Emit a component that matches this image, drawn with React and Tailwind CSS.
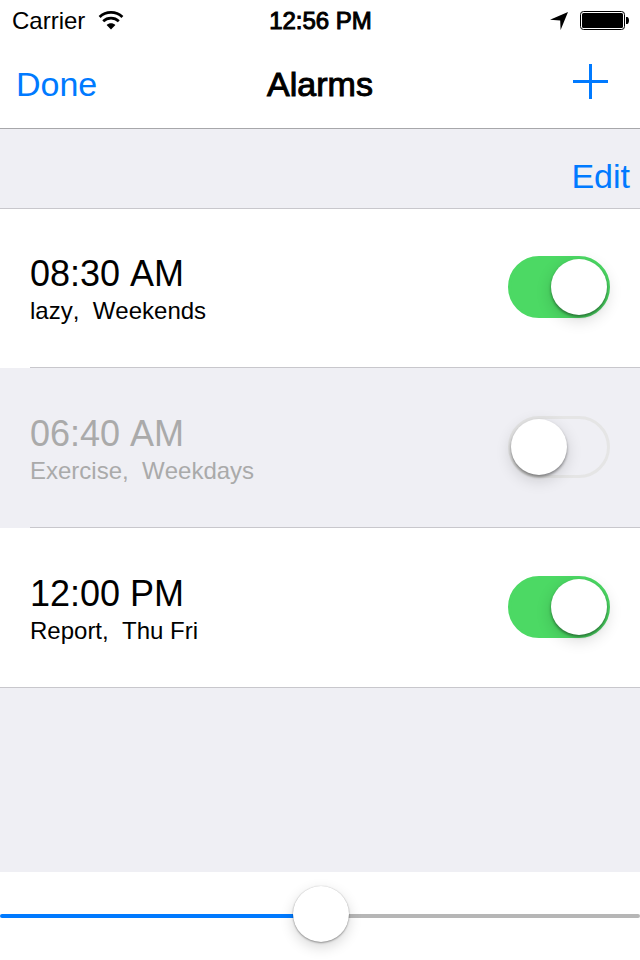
import { useState } from "react";

const INITIAL_ALARMS = [
  { id: 1, time: "08:30 AM", detail: "lazy,  Weekends", on: true },
  { id: 2, time: "06:40 AM", detail: "Exercise,  Weekdays", on: false },
  { id: 3, time: "12:00 PM", detail: "Report,  Thu Fri", on: true },
];

function WifiIcon() {
  return (
    <svg width="26" height="20" viewBox="0 0 26 20" fill="none" aria-hidden="true">
      <path d="M1.6 6C8 -0.1 18 -0.1 24.4 6" stroke="#000" strokeWidth="2.8" />
      <path d="M5.2 10.2C9.6 6.2 16.4 6.2 20.8 10.2" stroke="#000" strokeWidth="2.7" />
      <path d="M8.6 14C11 11.5 15 11.5 17.4 14L13 18.4Z" fill="#000" />
    </svg>
  );
}

function LocationIcon() {
  return (
    <svg width="18" height="18" viewBox="0 0 18 18" aria-hidden="true">
      <path d="M18 0L10.6 18L10.2 8.4L0 7.8Z" fill="#000" />
    </svg>
  );
}

function BatteryIcon() {
  return (
    <svg width="49" height="20" viewBox="0 0 49 20" aria-hidden="true">
      <rect x="0.5" y="0.5" width="44" height="18" rx="3" fill="#fff" stroke="#000" />
      <rect x="2" y="2" width="41" height="15" rx="1.5" fill="#000" />
      <path d="M46 6h1.2c1 0 1.8 1.6 1.8 3.5s-.8 3.5-1.8 3.5H46z" fill="#000" />
    </svg>
  );
}

function StatusBar() {
  return (
    <div className="grid h-10 grid-cols-3 items-center pt-0.5 pr-[11px] pl-3 text-2xl leading-8">
      <div className="flex items-center gap-[13px]">
        <span>Carrier</span>
        <WifiIcon />
      </div>
      <div className="text-center [-webkit-text-stroke:1px_#000]">12:56 PM</div>
      <div className="flex items-center justify-end gap-3">
        <LocationIcon />
        <BatteryIcon />
      </div>
    </div>
  );
}

function NavBar() {
  return (
    <header className="grid h-[88px] grid-cols-3 items-center px-4 text-[34px] leading-10">
      <button type="button" className="justify-self-start text-[#007aff]">
        Done
      </button>
      <h1 className="text-center [-webkit-text-stroke:1px_#000]">Alarms</h1>
      <button
        type="button"
        aria-label="Add alarm"
        className="flex h-10 items-start justify-self-end px-4 text-[#007aff]"
      >
        <svg width="35" height="35" viewBox="0 0 35 35" aria-hidden="true">
          <path d="M17.5 0V35M0 17.5H35" stroke="currentColor" strokeWidth="3" />
        </svg>
      </button>
    </header>
  );
}

function Switch({ label, checked, onChange }) {
  return (
    <input
      type="checkbox"
      role="switch"
      aria-label={label}
      checked={checked}
      onChange={onChange}
      className="h-[62px] w-[102px] shrink-0 cursor-pointer appearance-none rounded-full border-[3px] border-[#e5e5e5] before:block before:size-14 before:rounded-full before:bg-white before:shadow-[0_5px_16px_rgba(0,0,0,0.16),0_2px_3px_rgba(0,0,0,0.4)] before:transition-transform checked:border-[#4cd964] checked:bg-[#4cd964] checked:before:translate-x-10"
    />
  );
}

function AlarmRow({ alarm, onToggle }) {
  return (
    <li
      className={`group h-40 border-[#c8c7cc] pl-[30px] first:border-t last:border-b ${
        alarm.on ? "bg-white text-black" : "bg-[#efeff4] text-[#aaaaaa]"
      }`}
    >
      <div className="flex h-full items-center justify-between border-b border-[#c8c7cc] pr-[30px] pb-0.5 group-last:border-b-0">
        <div className="pt-0.5">
          <p className="text-4xl leading-[46px]">{alarm.time}</p>
          <p className="text-2xl leading-7 whitespace-pre">{alarm.detail}</p>
        </div>
        <Switch label={alarm.time} checked={alarm.on} onChange={onToggle} />
      </div>
    </li>
  );
}

function BrightnessBar() {
  const [value, setValue] = useState(502);
  return (
    <footer className="flex h-[88px] items-center bg-white">
      <input
        type="range"
        aria-label="Brightness"
        min="0"
        max="1000"
        value={value}
        onChange={(e) => setValue(Number(e.target.value))}
        style={{ "--fill": `${value / 10}%` }}
        className="h-16 w-full cursor-pointer appearance-none bg-transparent [&::-webkit-slider-runnable-track]:h-1 [&::-webkit-slider-runnable-track]:rounded-full [&::-webkit-slider-runnable-track]:bg-[linear-gradient(to_right,#007aff_var(--fill),#b6b6b6_var(--fill))] [&::-webkit-slider-thumb]:-mt-7 [&::-webkit-slider-thumb]:size-14 [&::-webkit-slider-thumb]:appearance-none [&::-webkit-slider-thumb]:rounded-full [&::-webkit-slider-thumb]:bg-white [&::-webkit-slider-thumb]:shadow-[0_5px_14px_rgba(0,0,0,0.16),0_1px_2px_rgba(0,0,0,0.35),0_0_1px_rgba(0,0,0,0.2)]"
      />
    </footer>
  );
}

export default function App() {
  const [alarms, setAlarms] = useState(INITIAL_ALARMS);

  const toggle = (id) =>
    setAlarms((list) => list.map((a) => (a.id === id ? { ...a, on: !a.on } : a)));

  return (
    <div className="flex min-h-screen flex-col bg-white font-['Liberation_Sans',Arial,sans-serif] text-black [font-kerning:none]">
      <StatusBar />
      <NavBar />
      <main className="flex-1 bg-[#efeff4]">
        <div className="flex h-20 items-end justify-end border-t border-[#a7a7aa] pr-2.5 pb-3">
          <button type="button" className="text-[34px] leading-10 text-[#007aff]">
            Edit
          </button>
        </div>
        <ul>
          {alarms.map((alarm) => (
            <AlarmRow key={alarm.id} alarm={alarm} onToggle={() => toggle(alarm.id)} />
          ))}
        </ul>
      </main>
      <BrightnessBar />
    </div>
  );
}
